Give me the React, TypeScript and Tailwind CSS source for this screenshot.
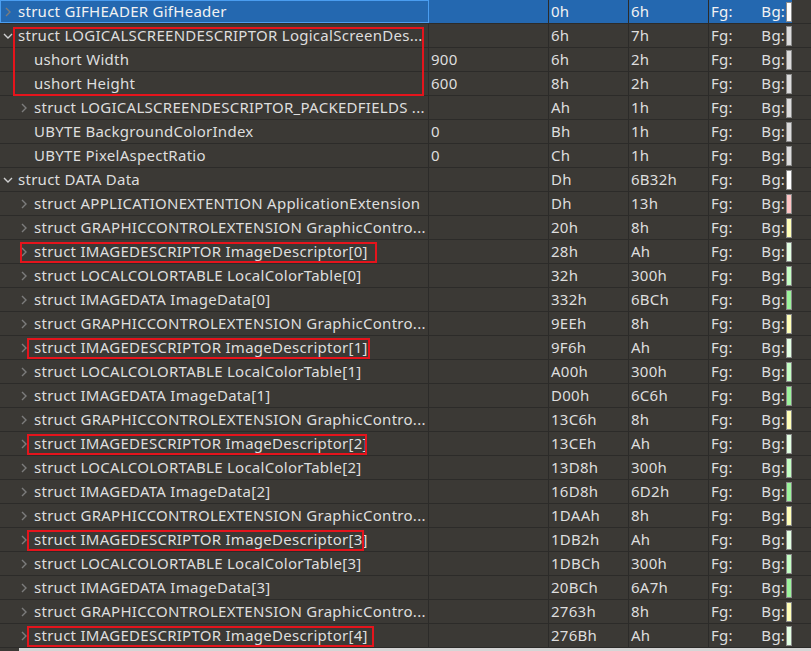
import React from 'react';

type Row = {
  name: string;
  level: number;
  chevron?: 'right' | 'down';
  value?: string;
  start: string;
  size: string;
  swatch: string;
  selected?: boolean;
};

const rows: Row[] = [
  { name: 'struct GIFHEADER GifHeader', level: 0, chevron: 'right', start: '0h', size: '6h', swatch: 'bg-white', selected: true },
  { name: 'struct LOGICALSCREENDESCRIPTOR LogicalScreenDes...', level: 0, chevron: 'down', start: '6h', size: '7h', swatch: 'bg-[#dcdcdc]' },
  { name: 'ushort Width', level: 1, value: '900', start: '6h', size: '2h', swatch: 'bg-[#dcdcdc]' },
  { name: 'ushort Height', level: 1, value: '600', start: '8h', size: '2h', swatch: 'bg-[#dcdcdc]' },
  { name: 'struct LOGICALSCREENDESCRIPTOR_PACKEDFIELDS ...', level: 1, chevron: 'right', start: 'Ah', size: '1h', swatch: 'bg-[#dcdcdc]' },
  { name: 'UBYTE BackgroundColorIndex', level: 1, value: '0', start: 'Bh', size: '1h', swatch: 'bg-[#dcdcdc]' },
  { name: 'UBYTE PixelAspectRatio', level: 1, value: '0', start: 'Ch', size: '1h', swatch: 'bg-[#dcdcdc]' },
  { name: 'struct DATA Data', level: 0, chevron: 'down', start: 'Dh', size: '6B32h', swatch: 'bg-white' },
  { name: 'struct APPLICATIONEXTENTION ApplicationExtension', level: 1, chevron: 'right', start: 'Dh', size: '13h', swatch: 'bg-[#ffc4c4]' },
  { name: 'struct GRAPHICCONTROLEXTENSION GraphicContro...', level: 1, chevron: 'right', start: '20h', size: '8h', swatch: 'bg-[#ffffb8]' },
  { name: 'struct IMAGEDESCRIPTOR ImageDescriptor[0]', level: 1, chevron: 'right', start: '28h', size: 'Ah', swatch: 'bg-[#e2ffe2]' },
  { name: 'struct LOCALCOLORTABLE LocalColorTable[0]', level: 1, chevron: 'right', start: '32h', size: '300h', swatch: 'bg-[#c4ffc4]' },
  { name: 'struct IMAGEDATA ImageData[0]', level: 1, chevron: 'right', start: '332h', size: '6BCh', swatch: 'bg-[#9cf49c]' },
  { name: 'struct GRAPHICCONTROLEXTENSION GraphicContro...', level: 1, chevron: 'right', start: '9EEh', size: '8h', swatch: 'bg-[#ffffb8]' },
  { name: 'struct IMAGEDESCRIPTOR ImageDescriptor[1]', level: 1, chevron: 'right', start: '9F6h', size: 'Ah', swatch: 'bg-[#e2ffe2]' },
  { name: 'struct LOCALCOLORTABLE LocalColorTable[1]', level: 1, chevron: 'right', start: 'A00h', size: '300h', swatch: 'bg-[#c4ffc4]' },
  { name: 'struct IMAGEDATA ImageData[1]', level: 1, chevron: 'right', start: 'D00h', size: '6C6h', swatch: 'bg-[#9cf49c]' },
  { name: 'struct GRAPHICCONTROLEXTENSION GraphicContro...', level: 1, chevron: 'right', start: '13C6h', size: '8h', swatch: 'bg-[#ffffb8]' },
  { name: 'struct IMAGEDESCRIPTOR ImageDescriptor[2]', level: 1, chevron: 'right', start: '13CEh', size: 'Ah', swatch: 'bg-[#e2ffe2]' },
  { name: 'struct LOCALCOLORTABLE LocalColorTable[2]', level: 1, chevron: 'right', start: '13D8h', size: '300h', swatch: 'bg-[#c4ffc4]' },
  { name: 'struct IMAGEDATA ImageData[2]', level: 1, chevron: 'right', start: '16D8h', size: '6D2h', swatch: 'bg-[#9cf49c]' },
  { name: 'struct GRAPHICCONTROLEXTENSION GraphicContro...', level: 1, chevron: 'right', start: '1DAAh', size: '8h', swatch: 'bg-[#ffffb8]' },
  { name: 'struct IMAGEDESCRIPTOR ImageDescriptor[3]', level: 1, chevron: 'right', start: '1DB2h', size: 'Ah', swatch: 'bg-[#e2ffe2]' },
  { name: 'struct LOCALCOLORTABLE LocalColorTable[3]', level: 1, chevron: 'right', start: '1DBCh', size: '300h', swatch: 'bg-[#c4ffc4]' },
  { name: 'struct IMAGEDATA ImageData[3]', level: 1, chevron: 'right', start: '20BCh', size: '6A7h', swatch: 'bg-[#9cf49c]' },
  { name: 'struct GRAPHICCONTROLEXTENSION GraphicContro...', level: 1, chevron: 'right', start: '2763h', size: '8h', swatch: 'bg-[#ffffb8]' },
  { name: 'struct IMAGEDESCRIPTOR ImageDescriptor[4]', level: 1, chevron: 'right', start: '276Bh', size: 'Ah', swatch: 'bg-[#e2ffe2]' },
];

// red annotation boxes drawn over the tree
const marks = [
  'left-[13px] top-[27px] w-[411px] h-[69px]',
  'left-[20px] top-[242px] w-[357px] h-[21px]',
  'left-[27px] top-[338px] w-[343px] h-[21px]',
  'left-[27px] top-[434px] w-[340px] h-[21px]',
  'left-[27px] top-[530px] w-[337px] h-[21px]',
  'left-[27px] top-[626px] w-[347px] h-[21px]',
];

const Chevron: React.FC<{ dir: 'right' | 'down' }> = ({ dir }) => (
  <svg width="10" height="12" viewBox="0 0 10 12" className="shrink-0">
    {dir === 'right' ? (
      <path d="M3 2 L7 6 L3 10" fill="none" stroke="#7c7c7c" strokeWidth="1.4" />
    ) : (
      <path d="M1 4 L5 8 L9 4" fill="none" stroke="#d0d0d0" strokeWidth="1.4" />
    )}
  </svg>
);

const TreeRow: React.FC<{ row: Row }> = ({ row }) => {
  const sel = row.selected;
  return (
    <div className="flex h-6 border-b border-[#2c2b29]">
      <div className={`flex w-[792px] ${sel ? 'bg-[#2468b0] text-[#f2f2f2]' : 'text-[#dedede]'}`}>
        <div
          className={`flex w-[429px] items-center overflow-hidden border-r border-[#2c2b29] ${
            sel ? 'outline outline-1 -outline-offset-1 outline-[#4a9df0]' : ''
          }`}
        >
          <div className={`flex shrink-0 items-center ${row.level === 0 ? 'w-[18px] pl-[3px]' : 'w-[34px] pl-[19px]'}`}>
            {row.chevron && <Chevron dir={row.chevron} />}
          </div>
          <span className="whitespace-nowrap">{row.name}</span>
        </div>
        <div className="flex w-[120px] items-center border-r border-[#2c2b29] pl-[2px]">{row.value}</div>
        <div className="flex w-[80px] items-center border-r border-[#2c2b29] pl-[2px]">{row.start}</div>
        <div className="flex w-[80px] items-center border-r border-[#2c2b29] pl-[2px]">{row.size}</div>
        <div className="flex w-[83px] items-center pl-[2px]">
          <span className="w-[51px]">Fg:</span>
          <span className="w-[25px]">Bg:</span>
          <span className={`h-[20px] w-[6px] border border-[#8c8c8c] ${row.swatch}`} />
        </div>
      </div>
    </div>
  );
};

export default function App() {
  return (
    <div
      className="relative h-[651px] w-[811px] overflow-hidden bg-[#3b3935] text-[15px] tracking-[0.27px]"
      style={{ fontFamily: '"Noto Sans", "Open Sans", sans-serif' }}
    >
      {rows.map((r, i) => (
        <TreeRow key={i} row={r} />
      ))}
      <div className="ml-[19px] h-[3px] bg-[#d6d6d6]" />
      {marks.map((m, i) => (
        <div key={i} className={`pointer-events-none absolute border-2 border-[#e5141c] ${m}`} />
      ))}
    </div>
  );
}
